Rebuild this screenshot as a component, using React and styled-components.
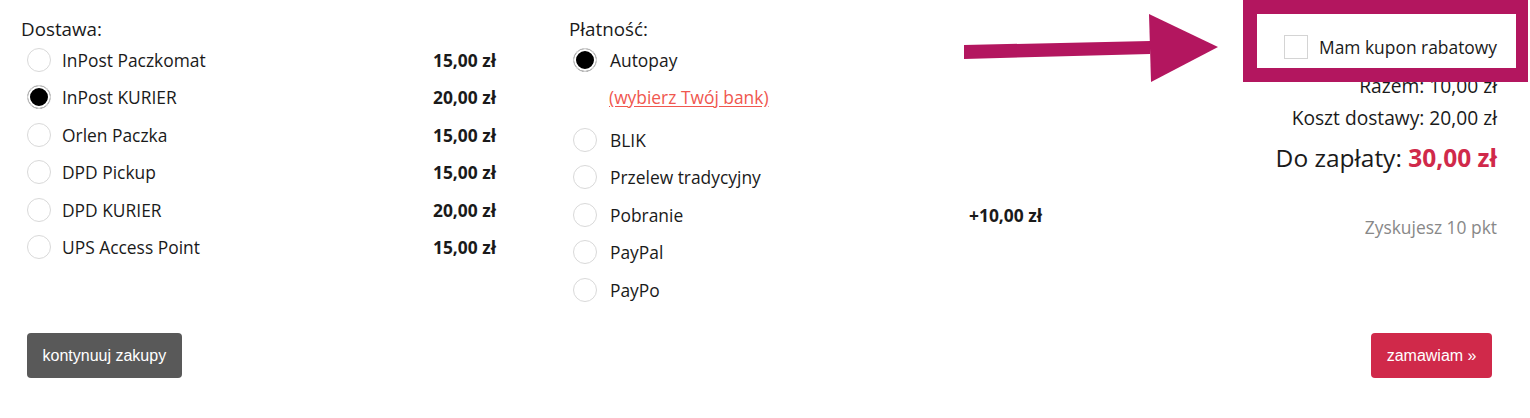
import React from "react";
import styled, { createGlobalStyle } from "styled-components";

const GlobalStyle = createGlobalStyle`
  * { box-sizing: border-box; }
  body {
    margin: 0;
    background: #fff;
    font-family: "Open Sans", "Liberation Sans", sans-serif;
    font-size: 17.4px;
    color: #1a1a1a;
  }
`;

const shipping = [
  { name: "InPost Paczkomat", price: "15,00 zł" },
  { name: "InPost KURIER", price: "20,00 zł", checked: true },
  { name: "Orlen Paczka", price: "15,00 zł" },
  { name: "DPD Pickup", price: "15,00 zł" },
  { name: "DPD KURIER", price: "20,00 zł" },
  { name: "UPS Access Point", price: "15,00 zł" },
];

const payments = [
  { name: "BLIK" },
  { name: "Przelew tradycyjny" },
  { name: "Pobranie", price: "+10,00 zł" },
  { name: "PayPal" },
  { name: "PayPo" },
];

export default function App() {
  return (
    <>
      <GlobalStyle />
      <Page>
        <Columns>
          <Section $width={475}>
            <Heading>Dostawa:</Heading>
            {shipping.map((s) => (
              <Option key={s.name} {...s} $offset={6} />
            ))}
          </Section>
          <Section $width={473}>
            <Heading>Płatność:</Heading>
            <Option name="Autopay" checked $offset={4} />
            <BankLink href="#">(wybierz Twój bank)</BankLink>
            {payments.map((p) => (
              <Option key={p.name} {...p} $offset={4} />
            ))}
          </Section>
          <Summary>
            <CouponRow>
              <Checkbox />
              <span>Mam kupon rabatowy</span>
            </CouponRow>
            <SumLine $first>Razem: 10,00 zł</SumLine>
            <SumLine>Koszt dostawy: 20,00 zł</SumLine>
            <Total>
              Do zapłaty: <strong>30,00 zł</strong>
            </Total>
            <Points>Zyskujesz 10 pkt</Points>
          </Summary>
        </Columns>
        <Footer>
          <Button $bg="#595959">kontynuuj zakupy</Button>
          <Button $bg="#d0294a">zamawiam »</Button>
        </Footer>
        <Highlight />
        <Arrow viewBox="0 0 260 70" width="260" height="70">
          <polygon points="0,31 186,27 186,40 0,45" fill="#b3165f" />
          <polygon points="185,0 254,33 187,68" fill="#b3165f" />
        </Arrow>
      </Page>
    </>
  );
}

function Option({ name, price, checked, $offset }) {
  return (
    <Row>
      <Radio $checked={checked} $offset={$offset} />
      <Label>{name}</Label>
      {price && <Price>{price}</Price>}
    </Row>
  );
}

const Page = styled.div`
  position: relative;
  width: 1530px;
  height: 418px;
  padding: 17px 33px 0 21px;
`;

const Columns = styled.div`
  display: grid;
  grid-template-columns: 548px 548px 1fr;
  align-items: start;
`;

const Section = styled.div`
  width: ${(p) => p.$width}px;
  display: flex;
  flex-direction: column;
`;

const Heading = styled.div`
  font-size: 18.8px;
  line-height: 24px;
`;

const Row = styled.div`
  display: flex;
  align-items: center;
  height: 37.5px;
`;

const Radio = styled.span`
  width: 24px;
  height: 24px;
  margin-left: ${(p) => p.$offset}px;
  margin-right: ${(p) => 41 - 24 - p.$offset}px;
  border-radius: 50%;
  border: 1px solid #d9d9d9;
  flex-shrink: 0;
  background: ${(p) => (p.$checked ? "#000" : "#fff")};
  box-shadow: ${(p) => (p.$checked ? "inset 0 0 0 2px #fff" : "none")};
`;

const Label = styled.span`
  flex: 1;
  line-height: 24px;
`;

const Price = styled.span`
  font-weight: 700;
`;

const BankLink = styled.a`
  display: block;
  margin-left: 40px;
  padding: 6px 0 12.5px;
  line-height: 24px;
  color: #f0574f;
  text-decoration: underline;
  text-underline-offset: 2px;
`;

const Summary = styled.div`
  display: flex;
  flex-direction: column;
  align-items: flex-end;
`;

const CouponRow = styled.div`
  display: flex;
  align-items: center;
  gap: 11px;
  height: 26px;
  margin-top: 17px;
`;

const Checkbox = styled.span`
  width: 24px;
  height: 24px;
  border: 1px solid #d4d4d4;
  background: #fff;
`;

const SumLine = styled.div`
  font-size: 19.2px;
  line-height: 32px;
  margin-top: ${(p) => (p.$first ? "10px" : "0")};
`;

const Total = styled.div`
  margin-top: 4px;
  font-size: 24.5px;
  line-height: 40px;

  strong {
    color: #d0294a;
    font-weight: 700;
  }
`;

const Points = styled.div`
  margin-top: 37px;
  line-height: 24px;
  color: #888;
`;

const Footer = styled.div`
  display: flex;
  justify-content: space-between;
  margin-top: 24px;
  padding: 0 5px 0 6px;
`;

const Button = styled.button`
  border: none;
  border-radius: 4px;
  background: ${(p) => p.$bg};
  color: #fff;
  font-family: "Liberation Sans", Arial, sans-serif;
  font-size: 16px;
  line-height: 21px;
  height: 45px;
  padding: 0 15.5px;
  cursor: pointer;
`;

const Highlight = styled.div`
  position: absolute;
  top: 0;
  left: 1243px;
  width: 285px;
  height: 82px;
  border: 14px solid #b3165f;
  border-right-width: 12px;
  pointer-events: none;
`;

const Arrow = styled.svg`
  position: absolute;
  left: 964px;
  top: 14px;
  pointer-events: none;
`;
